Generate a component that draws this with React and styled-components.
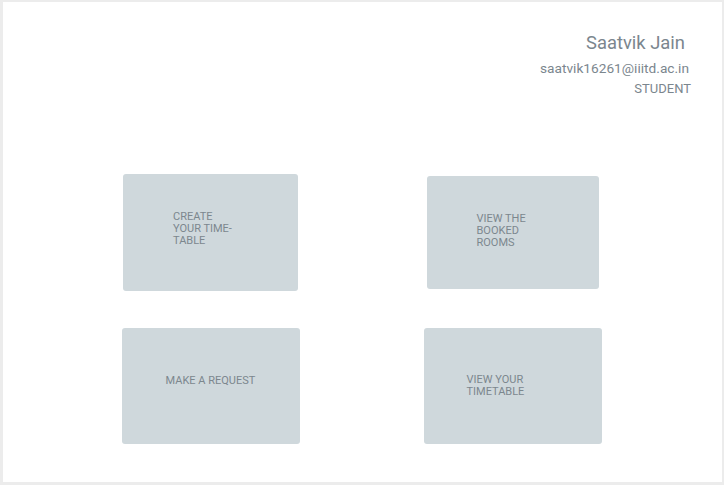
import React from 'react';
import styled, { createGlobalStyle } from 'styled-components';

const GlobalStyle = createGlobalStyle`
    html, body {
        margin: 0;
        padding: 0;
        background: #ececec;
        font-family: Roboto, "Liberation Sans", sans-serif;
    }
`;

const cards = [
    { label: 'CREATE YOUR TIME-TABLE', w: 175, h: 117, indent: 50, labelWidth: 64, lift: 8 },
    { label: 'VIEW THE BOOKED ROOMS', w: 172, h: 113, indent: 50, labelWidth: 64, lift: 4 },
    { label: 'MAKE A REQUEST', w: 178, h: 116, indent: 44, labelWidth: 100, lift: 11 },
    { label: 'VIEW YOUR TIMETABLE', w: 178, h: 116, indent: 43, labelWidth: 80, lift: 0 },
];

function App() {
    return (
        <>
            <GlobalStyle />
            <Frame>
                <Profile>
                    <Name>Saatvik Jain</Name>
                    <Email>saatvik16261@iiitd.ac.in</Email>
                    <Role>STUDENT</Role>
                </Profile>
                <CardGrid>
                    {cards.map((c) => (
                        <Card key={c.label} $w={c.w} $h={c.h} $indent={c.indent} $lift={c.lift}>
                            <Label $width={c.labelWidth}>{c.label}</Label>
                        </Card>
                    ))}
                </CardGrid>
            </Frame>
        </>
    );
}

export default App;

const Frame = styled.div`
    margin: 2px 2px 0 3px;
    height: 480px;
    background: #ffffff;
    box-sizing: border-box;
`;

const Profile = styled.div`
    display: flex;
    flex-direction: column;
    align-items: flex-end;
    padding: 29px 33px 0 0;
    color: #7b868e;
`;

const Name = styled.div`
    font-size: 18.4px;
    line-height: 24px;
    margin-right: 4px;
`;

const Email = styled.div`
    font-size: 13.7px;
    line-height: 20px;
    margin-top: 3px;
`;

const Role = styled.div`
    font-size: 13px;
    line-height: 20px;
    margin-right: -2px;
    margin-top: 1px;
`;

const CardGrid = styled.div`
    display: grid;
    grid-template-columns: 178px 178px;
    grid-template-rows: 117px 116px;
    justify-content: center;
    column-gap: 124px;
    row-gap: 37px;
    margin-top: 75px;
    padding-right: 2px;
`;

const Card = styled.div`
    justify-self: center;
    align-self: center;
    width: ${(p) => p.$w}px;
    height: ${(p) => p.$h}px;
    box-sizing: border-box;
    background: #cfd8dc;
    border-radius: 3px;
    display: flex;
    align-items: center;
    padding-left: ${(p) => p.$indent}px;
    padding-bottom: ${(p) => p.$lift}px;
`;

const Label = styled.div`
    max-width: ${(p) => p.$width}px;
    font-size: 11px;
    line-height: 12px;
    color: #7c878e;
`;
